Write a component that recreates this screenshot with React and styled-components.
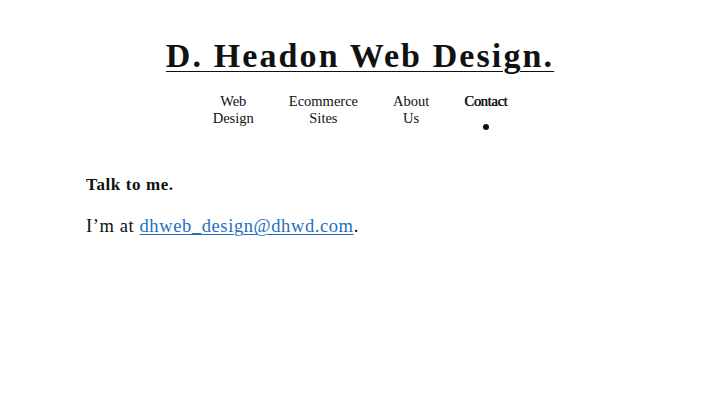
import React from 'react';
import styled, { createGlobalStyle } from 'styled-components';

const GlobalStyle = createGlobalStyle`
  html, body {
    margin: 0;
    padding: 0;
    background: #fff;
    color: #111;
    font-family: "Liberation Serif", "DejaVu Serif", serif;
  }
`;

const Page = styled.div`
  width: 720px;
  min-height: 405px;
  display: flex;
  flex-direction: column;
`;

const Header = styled.header`
  display: flex;
  flex-direction: column;
  align-items: center;
  padding-top: 36px;
`;

const Logo = styled.a`
  font-size: 34px;
  font-weight: 700;
  letter-spacing: 2.1px;
  line-height: 40px;
  color: #111;
  text-decoration: underline;
  text-decoration-thickness: 1px;
  text-underline-offset: 4px;
  text-decoration-skip-ink: auto;
`;

const Nav = styled.nav`
  display: flex;
  justify-content: center;
  gap: 35px;
  margin-top: 17px;
`;

const NavItem = styled.a`
  position: relative;
  width: min-content;
  text-align: center;
  font-size: 14.5px;
  line-height: 17px;
  color: #111;
  text-decoration: none;
  text-shadow: ${({ $active }) => ($active ? '0.5px 0 0 #111' : 'none')};
  letter-spacing: ${({ $active }) => ($active ? '-0.3px' : '0')};

  &::after {
    content: '';
    display: ${({ $active }) => ($active ? 'block' : 'none')};
    position: absolute;
    left: 50%;
    top: 31px;
    width: 6px;
    height: 6px;
    margin-left: -3px;
    border-radius: 50%;
    background: #111;
  }
`;

const Main = styled.main`
  padding: 46px 86px 0;
`;

const Heading = styled.h2`
  margin: 0;
  font-size: 17px;
  font-weight: 700;
  letter-spacing: 0.6px;
  line-height: 24px;
`;

const Text = styled.p`
  margin: 17px 0 0;
  font-size: 18.5px;
  letter-spacing: 0.6px;
  line-height: 24px;
`;

const Mail = styled.a`
  color: #1f6fc0;
  text-decoration: underline;
  text-decoration-thickness: 1px;
  text-underline-offset: 2px;
`;

const links = [
  { label: 'Web Design' },
  { label: 'Ecommerce Sites' },
  { label: 'About Us' },
  { label: 'Contact', active: true },
];

export default function App() {
  return (
    <Page>
      <GlobalStyle />
      <Header>
        <Logo href="#">D. Headon Web Design.</Logo>
        <Nav>
          {links.map((l) => (
            <NavItem key={l.label} href="#" $active={l.active}>
              {l.label}
            </NavItem>
          ))}
        </Nav>
      </Header>
      <Main>
        <Heading>Talk to me.</Heading>
        <Text>
          I’m at <Mail href="#">dhweb_design@dhwd.com</Mail>.
        </Text>
      </Main>
    </Page>
  );
}
